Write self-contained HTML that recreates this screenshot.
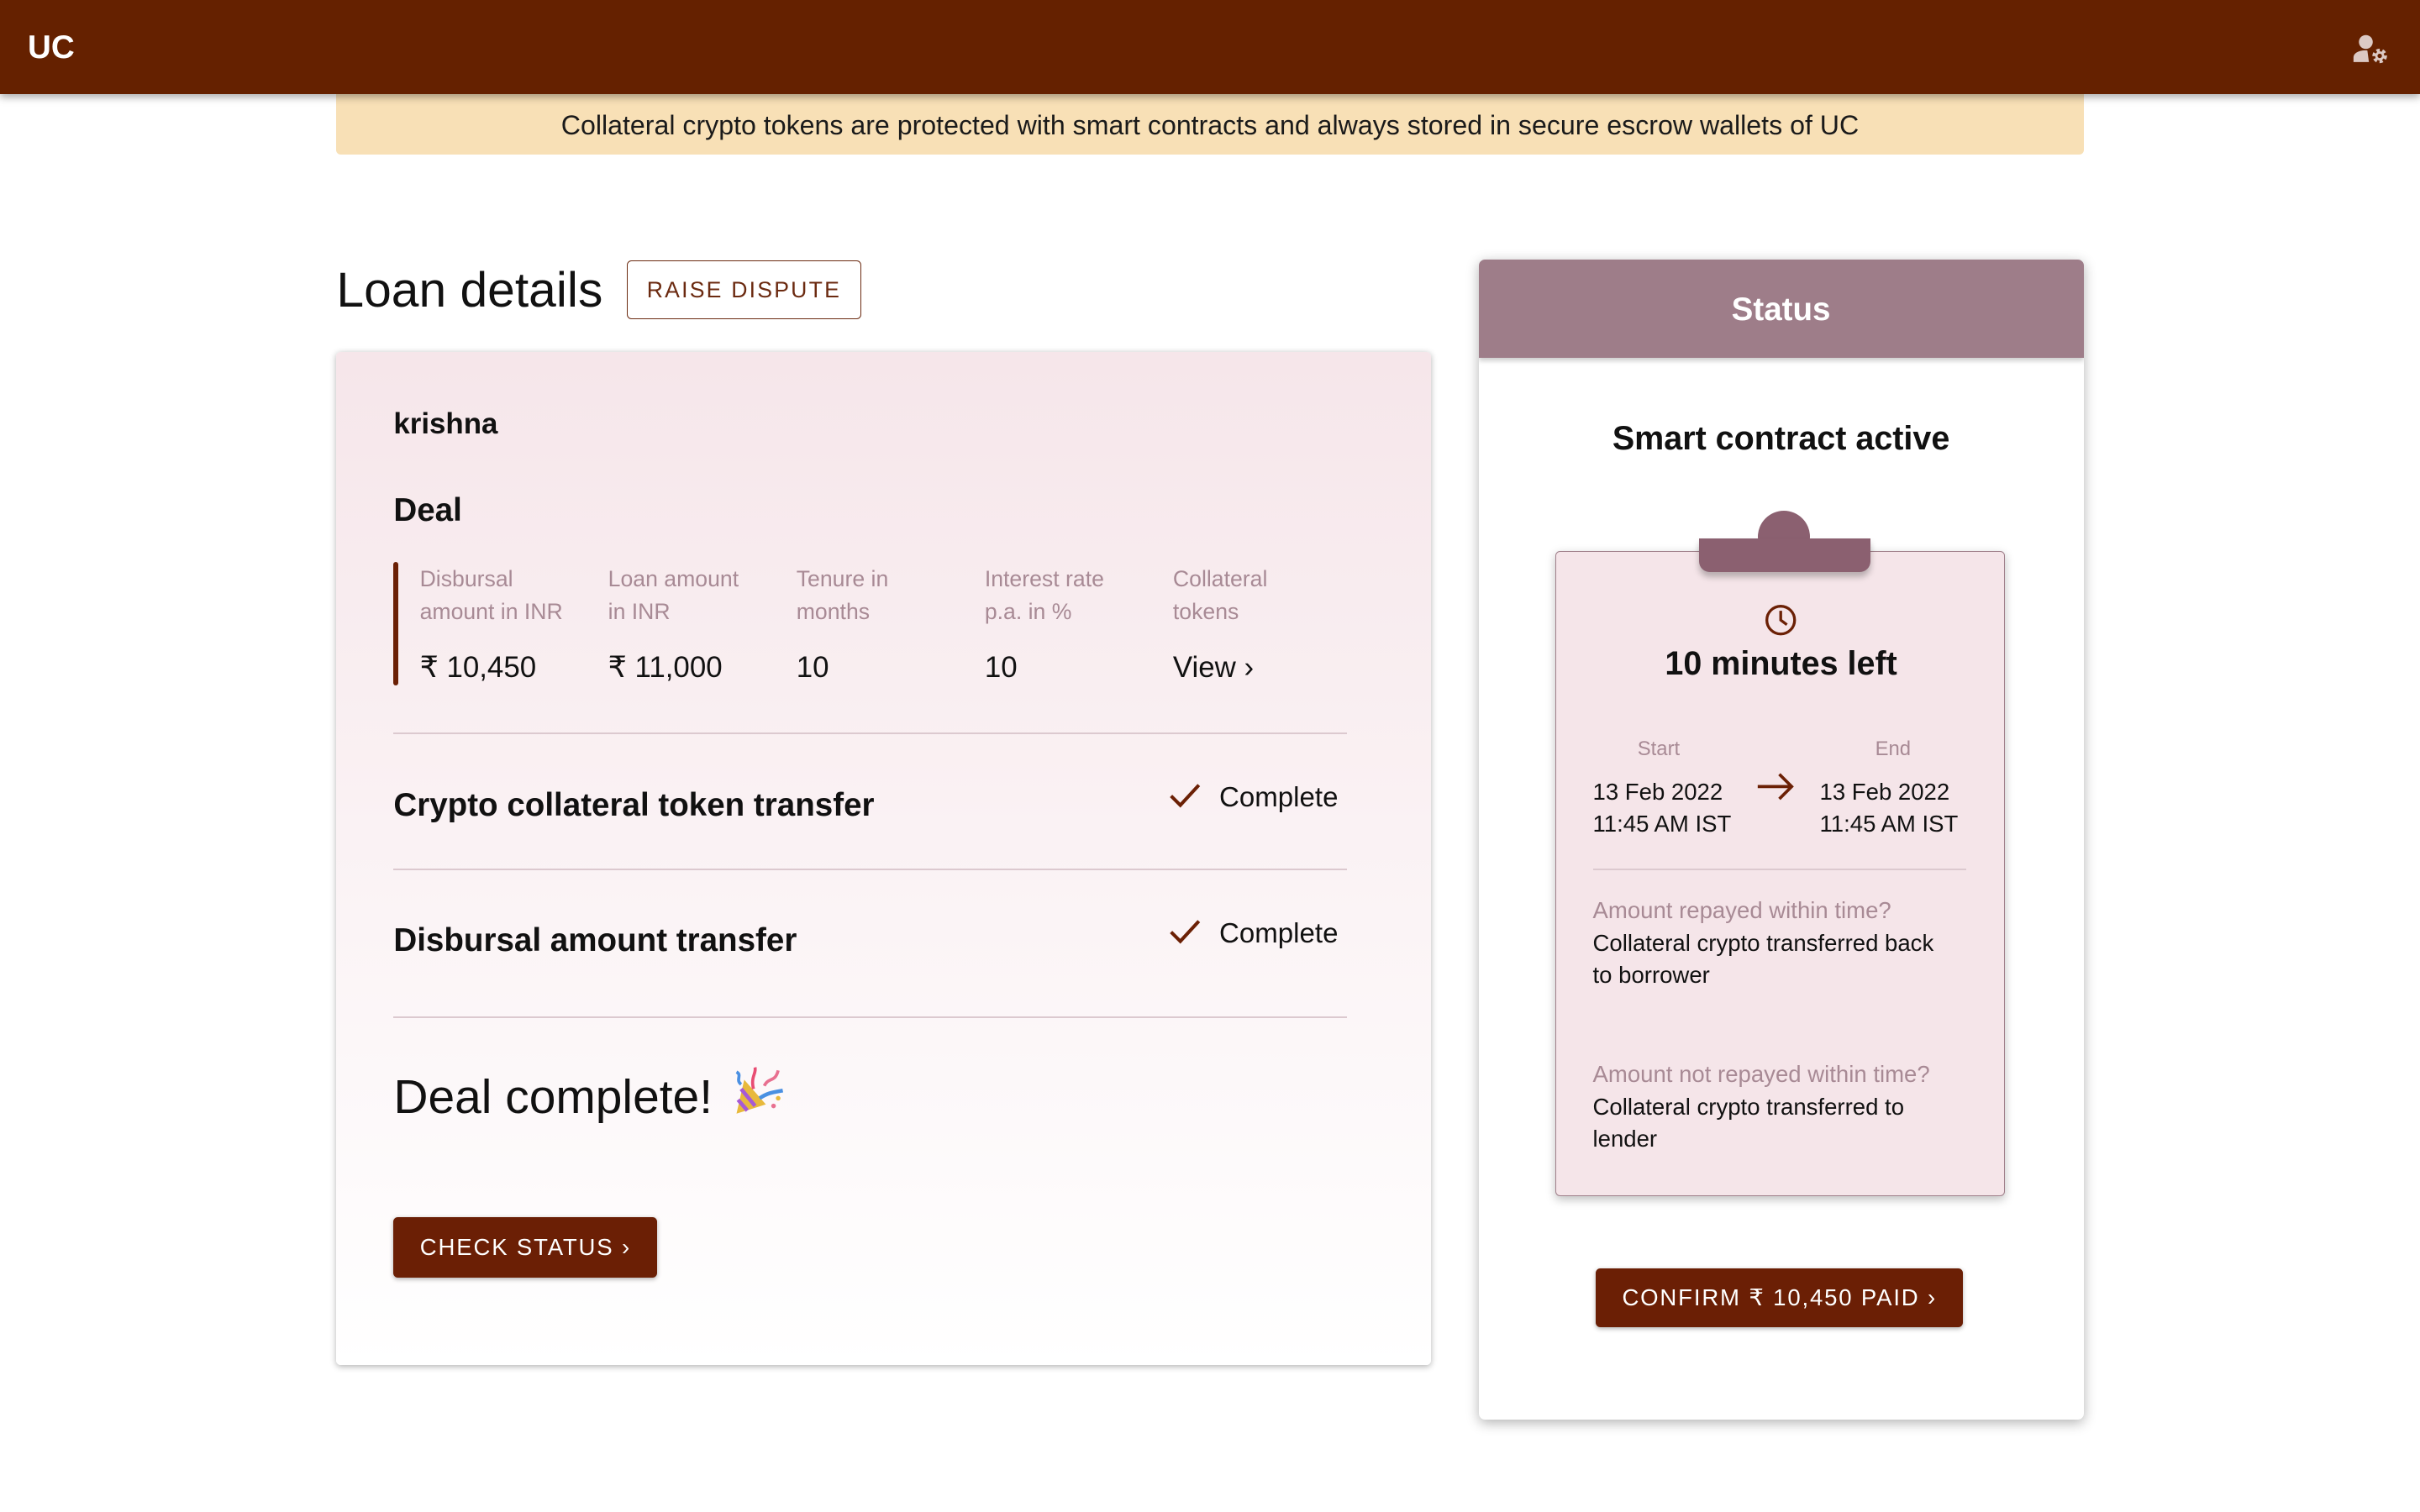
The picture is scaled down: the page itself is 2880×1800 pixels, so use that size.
<!DOCTYPE html>
<html><head><meta charset="utf-8"><style>
html{zoom:1.83673}
body{margin:0;width:1568px;height:980px;background:#fff;font-family:"Liberation Sans",sans-serif;position:relative;overflow:hidden;color:#111}
.a{position:absolute}
.hdr{left:0;top:0;width:1568px;height:61px;background:#652100;box-shadow:0 2px 5px rgba(0,0,0,.35);z-index:2}
.lbl{color:#a88a95;font-size:14.5px;line-height:21px}
.val{font-size:19px}
.sep{height:1px;background:#dcc9cf}
.btn{background:#6b1f05;color:#fff;font-size:15px;letter-spacing:1px;border-radius:3px;display:flex;align-items:center;justify-content:center;box-shadow:0 1px 3px rgba(0,0,0,.3)}
.h{font-size:21px;font-weight:bold}
.ck{font-size:18px}
.sm{font-size:15px;line-height:21px}
</style></head><body>
<div class="a hdr"></div>
<div class="a" style="left:18px;top:19px;color:#fff;font-weight:bold;font-size:21px;z-index:3">UC</div>
<svg class="a" style="left:1524px;top:21px;z-index:3" width="26" height="22" viewBox="0 0 26 22"><circle cx="9" cy="6" r="4.5" fill="#dcc9c4"/><path d="M1 19 v-3 c0-3 4-5 9-4.5 L11 19z" fill="#dcc9c4"/><circle cx="18" cy="15" r="3.5" fill="none" stroke="#dcc9c4" stroke-width="2.5" stroke-dasharray="2 1.6"/><circle cx="18" cy="15" r="2.2" fill="none" stroke="#dcc9c4" stroke-width="1.5"/></svg>
<div class="a" style="left:218px;top:61px;width:1132px;height:39px;background:#f8e0b6;border-radius:0 0 3px 3px;display:flex;align-items:center;justify-content:center;font-size:17.5px;color:#1a1a1a;padding-top:2px;box-sizing:border-box">Collateral crypto tokens are protected with smart contracts and always stored in secure escrow wallets of UC</div>
<div class="a" style="left:218px;top:170px;font-size:32px">Loan details</div>
<div class="a" style="left:406px;top:169px;width:151px;height:37px;border:1px solid #6b2a10;border-radius:3px;color:#6b2a10;font-size:14.5px;letter-spacing:1.2px;display:flex;align-items:center;justify-content:center">RAISE DISPUTE</div>

<div class="a" style="left:218px;top:228px;width:709px;height:657px;background:linear-gradient(#f6e6ea,#fff);box-shadow:0 1px 4px rgba(0,0,0,.3);border-radius:3px"></div>
<div class="a" style="left:255px;top:264px;font-size:19px;font-weight:bold">krishna</div>
<div class="a" style="left:255px;top:319px;font-size:21px;font-weight:bold">Deal</div>
<div class="a" style="left:255px;top:364px;width:3px;height:80px;background:#6b2005;border-radius:2px"></div>
<div class="a lbl" style="left:272px;top:365px">Disbursal<br>amount in INR</div>
<div class="a lbl" style="left:394px;top:365px">Loan amount<br>in INR</div>
<div class="a lbl" style="left:516px;top:365px">Tenure in<br>months</div>
<div class="a lbl" style="left:638px;top:365px">Interest rate<br>p.a. in %</div>
<div class="a lbl" style="left:760px;top:365px">Collateral<br>tokens</div>
<div class="a val" style="left:272px;top:422px">₹ 10,450</div>
<div class="a val" style="left:394px;top:422px">₹ 11,000</div>
<div class="a val" style="left:516px;top:422px">10</div>
<div class="a val" style="left:638px;top:422px">10</div>
<div class="a val" style="left:760px;top:422px">View ›</div>
<div class="a sep" style="left:255px;top:475px;width:618px"></div>
<div class="a h" style="left:255px;top:510px">Crypto collateral token transfer</div>
<svg class="a" style="left:757px;top:507px" width="22" height="18"><path d="M2 9 L8 15 L20 2" fill="none" stroke="#6b2005" stroke-width="2.2"/></svg>
<div class="a ck" style="left:790px;top:507px">Complete</div>
<div class="a sep" style="left:255px;top:563px;width:618px"></div>
<div class="a h" style="left:255px;top:598px">Disbursal amount transfer</div>
<svg class="a" style="left:757px;top:595px" width="22" height="18"><path d="M2 9 L8 15 L20 2" fill="none" stroke="#6b2005" stroke-width="2.2"/></svg>
<div class="a ck" style="left:790px;top:595px">Complete</div>
<div class="a sep" style="left:255px;top:659px;width:618px"></div>
<div class="a" style="left:255px;top:693px;font-size:31px">Deal complete!</div>
<svg class="a" style="left:474px;top:690px" width="36" height="34" viewBox="0 0 36 34"><path d="M8 10 L22 26 L3 32z" fill="#e8b93c"/><path d="M6 16 L15 27 M4 23 L10 30" stroke="#a65ad6" stroke-width="2.5"/><path d="M18 22 C24 18 28 18 33 17" stroke="#4a90e2" stroke-width="2.5" fill="none"/><path d="M14 16 C12 8 16 6 15 2" stroke="#e84d73" stroke-width="2" fill="none"/><path d="M21 14 C24 8 28 12 30 4" stroke="#e87090" stroke-width="2" fill="none"/><path d="M3 5 C7 7 2 10 6 13" stroke="#4a90e2" stroke-width="2" fill="none"/><circle cx="30" cy="22" r="1.5" fill="#e8b93c"/><circle cx="27" cy="27" r="1.5" fill="#e87090"/></svg>
<div class="a btn" style="left:255px;top:789px;width:171px;height:39px">CHECK STATUS ›</div>

<div class="a" style="left:958px;top:168px;width:392px;height:752px;background:#fff;box-shadow:0 2px 8px rgba(0,0,0,.3);border-radius:4px;overflow:hidden">
<div style="height:64px;background:#9e7d89;color:#fff;font-size:21px;font-weight:bold;display:flex;align-items:center;justify-content:center;box-shadow:0 2px 3px rgba(0,0,0,.2);padding-top:2px;box-sizing:border-box">Status</div></div>
<div class="a" style="left:958px;top:272px;width:392px;text-align:center;font-size:21.5px;font-weight:bold">Smart contract active</div>
<div class="a" style="left:1008px;top:357px;width:290px;height:417px;background:#f5e5e9;border:1px solid #a0808b;border-radius:3px;box-shadow:0 2px 6px rgba(0,0,0,.25)"></div>
<div class="a" style="left:1139px;top:331px;width:34px;height:34px;border-radius:50%;background:#8b6070"></div>
<div class="a" style="left:1101px;top:349px;width:111px;height:22px;background:#8b6070;border-radius:0 0 7px 7px;box-shadow:0 3px 4px rgba(0,0,0,.25)"></div>
<svg class="a" style="left:1143px;top:391px" width="22" height="22"><circle cx="11" cy="11" r="9" fill="none" stroke="#6b2005" stroke-width="1.8"/><path d="M11 5 V11 L15 14" fill="none" stroke="#6b2005" stroke-width="1.8"/></svg>
<div class="a" style="left:1008px;top:418px;width:292px;text-align:center;font-size:21.5px;font-weight:bold">10 minutes left</div>
<div class="a" style="left:1061px;top:478px;font-size:13px;color:#a88a95">Start</div>
<div class="a" style="left:1215px;top:478px;font-size:13px;color:#a88a95">End</div>
<div class="a sm" style="left:1032px;top:503px">13 Feb 2022<br>11:45 AM IST</div>
<div class="a sm" style="left:1179px;top:503px">13 Feb 2022<br>11:45 AM IST</div>
<svg class="a" style="left:1138px;top:500px" width="26" height="20"><path d="M1 10 H23 M15 2 L23 10 L15 18" fill="none" stroke="#6b2005" stroke-width="2"/></svg>
<div class="a sep" style="left:1032px;top:563px;width:242px"></div>
<div class="a sm" style="left:1032px;top:580px;width:236px"><span style="color:#a88a95">Amount repayed within time?</span><br>Collateral crypto transferred back to borrower</div>
<div class="a sm" style="left:1032px;top:686px;width:236px"><span style="color:#a88a95">Amount not repayed within time?</span><br>Collateral crypto transferred to<br>lender</div>
<div class="a btn" style="left:1034px;top:822px;width:238px;height:38px">CONFIRM ₹ 10,450 PAID ›</div>
</body></html>
